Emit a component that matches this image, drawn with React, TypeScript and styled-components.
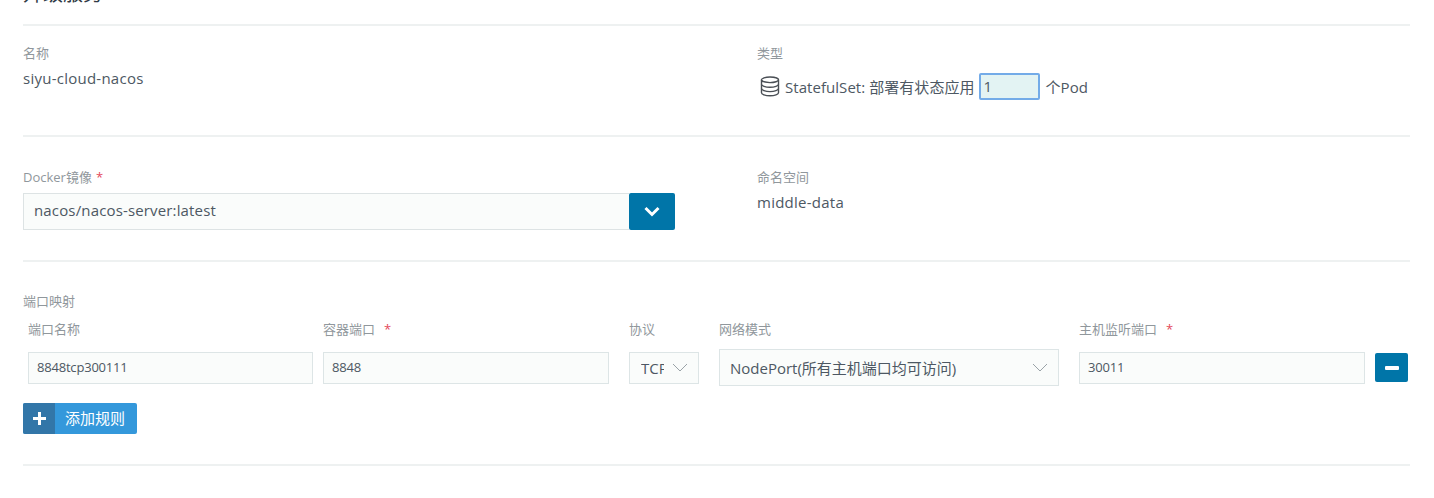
import React from 'react';
import styled, { createGlobalStyle } from 'styled-components';

const GlobalStyle = createGlobalStyle`
  html, body {
    margin: 0;
    padding: 0;
    background: #fff;
    overflow: hidden;
  }
  body {
    font-family: "Open Sans", "Noto Sans CJK SC", sans-serif;
    font-weight: 400;
    color: #4d5863;
  }
`;

const Page = styled.div`
  width: 1387px;
  height: 498px;
  padding: 0 24px 0 23px;
  overflow: hidden;
`;

const Title = styled.h2`
  height: 20px;
  margin: -16px 0 20px;
  font-size: 20px;
  line-height: 20px;
  font-weight: 400;
  color: #2f3a45;
`;

const Divider = styled.hr`
  height: 2px;
  margin: 0;
  border: 0;
  background: #eef1f1;
`;

const Section = styled.section<{ $height: number; $top: number }>`
  display: grid;
  grid-template-columns: 734px 1fr;
  align-items: start;
  box-sizing: border-box;
  height: ${(p) => p.$height}px;
  padding-top: ${(p) => p.$top}px;
`;

const Label = styled.div`
  height: 16px;
  font-size: 13px;
  line-height: 16px;
  color: #90979c;
`;

const Value = styled.div`
  margin-top: 7px;
  font-size: 15px;
  line-height: 20px;
  letter-spacing: 0.25px;
`;

const TypeRow = styled.div`
  display: flex;
  align-items: center;
  height: 27px;
  margin-top: 12px;
  padding-left: 3px;
  font-size: 15px;
  letter-spacing: 0.05px;
`;

const ReplicaInput = styled.div`
  box-sizing: border-box;
  width: 61px;
  height: 27px;
  margin: 0 6px 0 4px;
  padding-left: 3px;
  border: 2px solid #73abe8;
  border-radius: 2px;
  background: #e3f3f3;
  font-size: 15px;
  line-height: 23px;
`;

const Required = styled.span<{ $gap: number }>`
  margin-left: ${(p) => p.$gap}px;
  color: #e4495b;
`;

const ImageRow = styled.div`
  display: flex;
  width: 652px;
  height: 37px;
  margin-top: 8px;
`;

const ImageField = styled.div`
  flex: 1;
  box-sizing: border-box;
  padding-left: 10px;
  border: 1px solid #dde3e4;
  border-right: 0;
  background: #fafcfb;
  font-size: 15px;
  line-height: 33px;
  letter-spacing: 0.15px;
`;

const IconButton = styled.div<{ $width: number; $height: number }>`
  display: flex;
  align-items: center;
  justify-content: center;
  width: ${(p) => p.$width}px;
  height: ${(p) => p.$height}px;
  border-radius: 2px;
  background: #0075a8;
`;

const PortsSection = styled.section`
  height: 202px;
  box-sizing: border-box;
  padding-top: 31px;
`;

const PortGrid = styled.div`
  display: grid;
  grid-template-columns: 295px 306px 90px 360px 296px 33px;
  row-gap: 12px;
  margin: 12px 0 0 5px;
  align-items: center;
`;

const PortInput = styled.div<{ $width: number }>`
  box-sizing: border-box;
  width: ${(p) => p.$width}px;
  height: 32px;
  padding-left: 8px;
  border: 1px solid #dde5e6;
  background: #fafcfb;
  font-size: 13px;
  line-height: 29px;
  letter-spacing: -0.2px;
`;

const SelectBox = styled.div<{ $width: number; $height: number }>`
  display: flex;
  align-items: center;
  justify-content: space-between;
  box-sizing: border-box;
  width: ${(p) => p.$width}px;
  height: ${(p) => p.$height}px;
  padding: 0 10px;
  border: 1px solid #dde5e6;
  background: #fafcfb;
  font-size: 15px;
  overflow: hidden;
`;

const ClippedText = styled.span`
  width: 23px;
  margin-left: 1px;
  overflow: hidden;
  white-space: nowrap;
`;

const AddButton = styled.div`
  display: flex;
  width: 114px;
  height: 31px;
  margin-top: 17px;
  border-radius: 2px;
  overflow: hidden;
  background: #3498db;
  color: #fff;
  font-size: 15px;
  line-height: 31px;
`;

const AddIcon = styled.div`
  display: flex;
  align-items: center;
  justify-content: center;
  width: 32px;
  background: #3276a8;
`;

const AddText = styled.span`
  padding-left: 10px;
`;

const StackSvg = styled.svg`
  margin-right: 5px;
`;

const Caret = () => (
  <svg width="16" height="9" viewBox="0 0 16 9" fill="none" stroke="#9aa3a8" strokeWidth="1">
    <path d="M1 1l7 7 7-7" />
  </svg>
);

const StackIcon = () => (
  <StackSvg width="20" height="21" viewBox="0 0 20 21" fill="none" stroke="#4a4f55" strokeWidth="1.4">
    <ellipse cx="10" cy="3.8" rx="8.5" ry="2.8" />
    <path d="M1.5 3.8v13c0 1.6 3.8 3 8.5 3s8.5-1.4 8.5-3v-13" />
    <path d="M1.5 8.2c0 1.6 3.8 3 8.5 3s8.5-1.4 8.5-3" />
    <path d="M1.5 12.6c0 1.6 3.8 3 8.5 3s8.5-1.4 8.5-3" />
  </StackSvg>
);

const App: React.FC = () => {
  return (
    <Page>
      <GlobalStyle />
      <Title>升级服务</Title>
      <Divider />
      <Section $height={109} $top={19}>
        <div>
          <Label>名称</Label>
          <Value>siyu-cloud-nacos</Value>
        </div>
        <div>
          <Label>类型</Label>
          <TypeRow>
            <StackIcon />
            StatefulSet: 部署有状态应用
            <ReplicaInput>1</ReplicaInput>
            个Pod
          </TypeRow>
        </div>
      </Section>
      <Divider />
      <Section $height={123} $top={32}>
        <div>
          <Label>
            Docker镜像<Required $gap={4}>*</Required>
          </Label>
          <ImageRow>
            <ImageField>nacos/nacos-server:latest</ImageField>
            <IconButton $width={46} $height={37}>
              <svg width="16" height="11" viewBox="0 0 16 11" fill="none" stroke="#fff" strokeWidth="3">
                <path d="M1.5 2l6.5 6.5L14.5 2" />
              </svg>
            </IconButton>
          </ImageRow>
        </div>
        <div>
          <Label>命名空间</Label>
          <Value>middle-data</Value>
        </div>
      </Section>
      <Divider />
      <PortsSection>
        <Label>端口映射</Label>
        <PortGrid>
          <Label>端口名称</Label>
          <Label>
            容器端口<Required $gap={9}>*</Required>
          </Label>
          <Label>协议</Label>
          <Label>网络模式</Label>
          <Label>
            主机监听端口<Required $gap={9}>*</Required>
          </Label>
          <div />
          <PortInput $width={285}>8848tcp300111</PortInput>
          <PortInput $width={286}>8848</PortInput>
          <SelectBox $width={70} $height={32}>
            <ClippedText>TCP</ClippedText>
            <Caret />
          </SelectBox>
          <SelectBox $width={340} $height={37}>
            NodePort(所有主机端口均可访问)
            <Caret />
          </SelectBox>
          <PortInput $width={286}>30011</PortInput>
          <IconButton $width={33} $height={29}>
            <svg width="14" height="4" viewBox="0 0 14 4">
              <rect width="14" height="4" rx="1" fill="#fff" />
            </svg>
          </IconButton>
        </PortGrid>
        <AddButton>
          <AddIcon>
            <svg width="13" height="13" viewBox="0 0 13 13">
              <path d="M5 0h3v5h5v3H8v5H5V8H0V5h5z" fill="#fff" />
            </svg>
          </AddIcon>
          <AddText>添加规则</AddText>
        </AddButton>
      </PortsSection>
      <Divider />
    </Page>
  );
};

export default App;
